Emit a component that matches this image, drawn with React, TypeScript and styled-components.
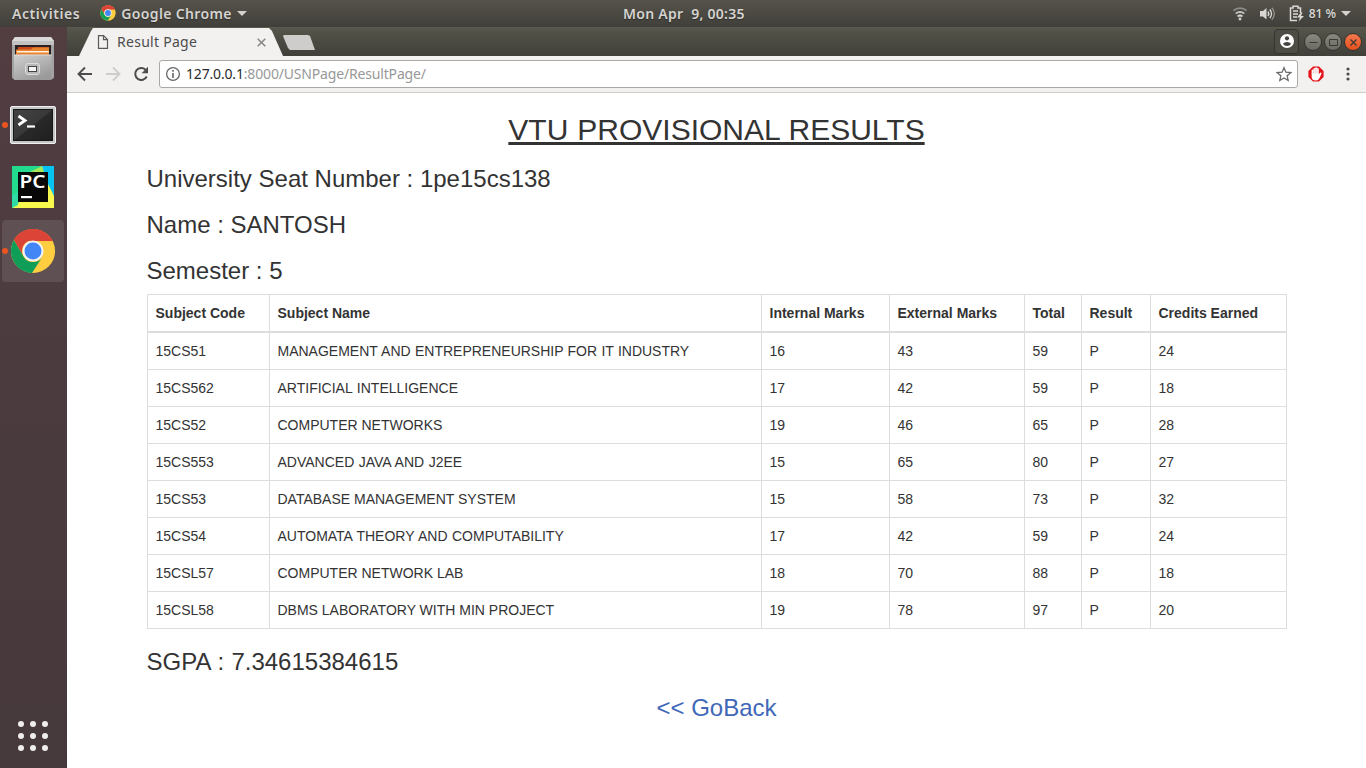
import React from "react";
import styled, { createGlobalStyle } from "styled-components";

const Global = createGlobalStyle`
  * { box-sizing: border-box; }
  body { margin: 0; background: #fff; overflow: hidden; }
`;
const ui = `"Noto Sans", "Open Sans", sans-serif`;

const Desktop = styled.div`
  width: 1366px;
  height: 768px;
  display: flex;
  flex-direction: column;
  overflow: hidden;
  font-family: ${ui};
`;
const TopBar = styled.header`
  height: 27px;
  flex: none;
  display: grid;
  grid-template-columns: 1fr 124px 1fr;
  align-items: center;
  background: linear-gradient(#56534b, #403f3a);
  color: #d6d4d0;
`;
const BarGroup = styled.div<{ $end?: boolean }>`
  display: flex;
  align-items: center;
  height: 27px;
  justify-content: ${(p) => (p.$end ? "flex-end" : "flex-start")};
  padding: ${(p) => (p.$end ? "0 15px 0 0" : "0 0 0 12px")};
`;
const BarText = styled.span<{ $size?: number; $spacing?: number; $ml?: number }>`
  font-size: ${(p) => p.$size ?? 14}px;
  font-weight: 600;
  line-height: 26px;
  letter-spacing: ${(p) => p.$spacing ?? 0}px;
  margin-left: ${(p) => p.$ml ?? 0}px;
  white-space: pre;
  text-shadow: 0 1px 1px #2d2c29;
`;
const Caret = styled.i<{ $ml: number }>`
  margin-left: ${(p) => p.$ml}px;
  border: 5px solid transparent;
  border-top-color: #d4d2ce;
  border-bottom: 0;
`;
const Body = styled.div`
  flex: 1;
  display: flex;
  min-height: 0;
`;
const Dock = styled.nav`
  width: 67px;
  flex: none;
  display: flex;
  flex-direction: column;
  background: linear-gradient(#523d41, #4b3b3f 45%, #46393c);
`;
const DockItem = styled.div<{ $active?: boolean; $h: number }>`
  height: ${(p) => p.$h}px;
  width: 62px;
  margin-left: 2px;
  display: flex;
  align-items: center;
  justify-content: center;
  position: relative;
  border-radius: 4px;
  background: ${(p) => (p.$active ? "#5f5054" : "transparent")};
`;
const RunningDot = styled.i`
  position: absolute;
  left: 0;
  top: 50%;
  width: 6px;
  height: 6px;
  margin-top: -3px;
  border-radius: 50%;
  background: #e95420;
`;
const DockEnd = styled.div`
  margin-top: auto;
  padding: 0 0 16px 17px;
  height: 48px;
  display: flex;
`;
const Browser = styled.main`
  flex: 1;
  display: flex;
  flex-direction: column;
  background: #fff;
`;
const TabStrip = styled.div`
  height: 29px;
  flex: none;
  display: flex;
  align-items: flex-end;
  background: linear-gradient(#5b5a4e 0, #54544a 2px, #403f39);
`;
const Tab = styled.div`
  width: 204px;
  height: 28px;
  margin-left: 12px;
  padding: 0 16px 0 18px;
  display: flex;
  align-items: center;
  background: #f2f1f0;
  clip-path: polygon(0 100%, 12px 3px, 14px 0, 190px 0, 193px 3px, 100% 100%);
`;
const TabTitle = styled.span`
  flex: 1;
  margin: -1px 0 0 8px;
  font-size: 14px;
  letter-spacing: 0.28px;
  color: #4c4c4c;
`;
const NewTab = styled.div`
  width: 32px;
  height: 15px;
  margin: 0 0 6px 0;
  background: #cecdcb;
  clip-path: polygon(1px 0, 25px 0, 27px 1px, 32px 15px, 7px 15px, 5px 13px, 0 1px);
`;
const WindowControls = styled.div`
  margin-left: auto;
  height: 28px;
  display: flex;
  align-items: center;
  padding-right: 4px;
`;
const ProfileButton = styled.div`
  width: 25px;
  height: 25px;
  border: 1px solid #34332e;
  border-radius: 4px;
  display: flex;
  align-items: center;
  justify-content: center;
  margin: 0 5px 2px 0;
  background: #4e4d45;
`;
const RoundButton = styled.div<{ $close?: boolean }>`
  width: 18px;
  height: 18px;
  border-radius: 50%;
  border: 1px solid #35342f;
  background: ${(p) => (p.$close ? "linear-gradient(#f5784d, #e4511d)" : "linear-gradient(#898880, #6a6962)")};
  display: flex;
  align-items: center;
  justify-content: center;
  & + & { margin-left: 2px; }
`;
const Toolbar = styled.div`
  height: 37px;
  flex: none;
  display: flex;
  align-items: center;
  background: #f2f1f0;
  border-bottom: 1px solid #cdcccb;
  padding-left: 9px;
`;
const AddressBar = styled.div`
  width: 1139px;
  height: 28px;
  margin-left: 9px;
  display: flex;
  align-items: center;
  border: 1px solid #a9a8a7;
  border-radius: 3px;
  background: #fff;
  padding: 0 5px;
`;
const Url = styled.span`
  flex: 1;
  margin-left: 5px;
  font-size: 14px;
  line-height: 24px;
  letter-spacing: -0.17px;
  color: #989898;
`;
const Host = styled.span`
  color: #2b2b2b;
`;
const Page = styled.div`
  width: 1170px;
  margin: 0 auto;
  padding: 20px 15px 0;
  font-family: "Liberation Sans", Arial, sans-serif;
  color: #333;
`;
const Title = styled.h2`
  margin: 0 0 20px;
  font-size: 30px;
  line-height: 33px;
  font-weight: 400;
  text-align: center;
  text-decoration: underline;
  text-decoration-skip-ink: none;
  word-spacing: 0.6px;
`;
const Info = styled.h3<{ $gap?: number; $center?: boolean; $words?: number }>`
  margin: 0 0 ${(p) => p.$gap ?? 20}px;
  font-size: 24px;
  line-height: 26px;
  font-weight: 400;
  text-align: ${(p) => (p.$center ? "center" : "left")};
  word-spacing: ${(p) => p.$words ?? 0}px;
`;
const BackLink = styled.a`
  color: #3f68b8;
  text-decoration: none;
`;
const Table = styled.table`
  width: 1139px;
  table-layout: fixed;
  border-collapse: collapse;
  margin-bottom: 20px;
  font-size: 14px;
  line-height: 20px;
`;
const Th = styled.th`
  padding: 8px;
  text-align: left;
  border: 1px solid #ddd;
  border-bottom-width: 2px;
`;
const Td = styled.td<{ $words?: number }>`
  padding: 8px;
  border: 1px solid #ddd;
  word-spacing: ${(p) => p.$words ?? 0}px;
`;

const ChromeLogo = ({ size }: { size: number }) => (
  <svg width={size} height={size} viewBox="0 0 48 48">
    <circle cx="24" cy="24" r="23" fill="#ffcd40" />
    <path d="M4.100 12.500A23 23 0 0 1 43.900 12.500H24a11.500 11.500 0 0 0-10 17.200z" fill="#dc4437" />
    <path d="M4.100 12.500A23 23 0 0 0 23 47L34 29.700a11.500 11.500 0 0 1-20 0z" fill="#109d58" />
    <path d="M4.100 12.500A23 23 0 0 1 43.900 12.500H44.500V13.500H24z" fill="#dc4437" />
    <circle cx="24" cy="24" r="11" fill="#f2f2f2" />
    <circle cx="24" cy="24" r="8.800" fill="#4285f4" />
  </svg>
);

const FilesIcon = () => (
  <svg width="44" height="46" viewBox="0 0 44 46">
    <defs>
      <linearGradient id="cab" x2="0.600" y2="1"><stop stopColor="#d0d0d0" /><stop offset="1" stopColor="#9a9a9a" /></linearGradient>
    </defs>
    <path d="M4 1h36l3 4v36q0 2-2 2H3q-2 0-2-2V5z" fill="#a3a3a3" />
    <path d="M4 1h36l3 4H1z" fill="#d9d9d9" />
    <path d="M1 5h42v4H1z" fill="#c2c2c2" />
    <path d="M4 9h36v12H4z" fill="#2a2220" />
    <path d="M7 11h31v5H7z" fill="#c8481b" />
    <path d="M5 13.500h15l2-2h16v8H5z" fill="#e88430" />
    <path d="M6 15h32v1.500H6z" fill="#fff1df" />
    <path d="M3 19h37.500v25H3z" fill="url(#cab)" />
    <path d="M3 19h37.500" stroke="#dedede" />
    <rect x="14.500" y="27.500" width="14" height="11" rx="2.500" fill="#b9b9b9" stroke="#dcdcdc" />
    <rect x="17.500" y="30.500" width="8" height="5" fill="#f5f5f5" stroke="#444" />
  </svg>
);

const TerminalIcon = () => (
  <svg width="46" height="38" viewBox="0 0 46 38">
    <defs>
      <linearGradient id="scr" x2="1" y2="1"><stop stopColor="#444" /><stop offset="0.500" stopColor="#383838" /><stop offset="0.510" stopColor="#292929" /><stop offset="1" stopColor="#1f1f1f" /></linearGradient>
    </defs>
    <rect x="0.500" y="0.500" width="45" height="37" rx="1.500" fill="#c6c6c6" stroke="#f0f0f0" />
    <rect x="3.500" y="3.500" width="39" height="31" fill="url(#scr)" stroke="#161616" />
    <path d="M8.500 10l6.500 4.500-6.500 4.500" fill="none" stroke="#fff" strokeWidth="2.800" />
    <path d="M17 20.500h8" stroke="#fff" strokeWidth="2.200" />
  </svg>
);

const PyCharmIcon = () => (
  <svg width="42" height="42" viewBox="0 0 42 42">
    <path d="M0 0h42v42H0z" fill="#f8f94c" />
    <path d="M0 0h32L18 8 6 38l-6 4z" fill="#22db8e" />
    <path d="M18 6L30 0l3 8H18z" fill="#a4e85a" />
    <path d="M30 0h12v30l-6-12z" fill="#07c3f2" />
    <path d="M0 42V30l6-4v13z" fill="#2fdca6" />
    <path d="M6 6h30v30H6z" fill="#080808" />
    <text x="7.500" y="22" fontFamily="Noto Sans, sans-serif" fontSize="18.500" fontWeight="600" fill="#fff" textLength="26" lengthAdjust="spacingAndGlyphs">PC</text>
    <path d="M9 30h11v2.200H9z" fill="#fff" />
  </svg>
);

const AppsIcon = () => (
  <svg width="32" height="32" viewBox="0 0 32 32" fill="#efeeed">
    {[4, 16, 28].map((y) => [4, 16, 28].map((x) => <circle key={`${x}-${y}`} cx={x} cy={y} r="3" />))}
  </svg>
);

const WifiIcon = () => (
  <svg width="16" height="16" viewBox="0 0 16 16" fill="none" stroke="#8f8d87" strokeWidth="1.800">
    <path d="M1.500 4.700a9.600 9.600 0 0 1 13 0" />
    <path d="M3.700 7.700a6.300 6.300 0 0 1 8.600 0" stroke="#c4c2be" />
    <path d="M5.600 10.500a3.700 3.700 0 0 1 4.800 0" stroke="#dad8d4" />
    <circle cx="8" cy="13" r="1.100" fill="#dad8d4" stroke="#dad8d4" strokeWidth="0.800" />
  </svg>
);
const VolumeIcon = () => (
  <svg width="16" height="14" viewBox="0 0 16 14" fill="none">
    <path d="M1 4h3l3.500-3v11.500L4 9.500H1z" fill="#dad8d4" />
    <path d="M9 4.500a4 4 0 0 1 0 4.500" stroke="#dad8d4" strokeWidth="1.500" />
    <path d="M10.800 2.500a6.500 6.500 0 0 1 0 8.500" stroke="#dad8d4" strokeWidth="1.500" />
    <path d="M12.800 .8a8.500 8.500 0 0 1 0 12" stroke="#92908a" strokeWidth="1.400" />
  </svg>
);
const BatteryIcon = () => (
  <svg width="15" height="17" viewBox="0 0 15 17" fill="none" stroke="#dad8d4">
    <path d="M8 15.500H1.500V3H4V1.200h5V3h2.500v5" strokeWidth="1.500" />
    <path d="M4 6h5M4 9h5M4 12h4" strokeWidth="1.700" />
    <path d="M12 7.500L8 12.500h3l-1.500 4L15 11h-3l1.500-3.500z" fill="#dad8d4" stroke="none" />
  </svg>
);
const DocumentIcon = () => (
  <svg width="12" height="16" viewBox="0 0 12 16" fill="none" stroke="#5a5a5a" strokeWidth="1.200">
    <path d="M1.500 1.600h5l4 4v8.800h-9z" /><path d="M6.500 1.600v4h4" />
  </svg>
);
const ArrowIcon = ({ forward }: { forward?: boolean }) => (
  <svg width="18" height="18" viewBox="0 0 18 18" fill="none" stroke={forward ? "#cecdcc" : "#4c4c4c"} strokeWidth="1.900">
    <path d={forward ? "M2 9h13M9 2.500L15.500 9 9 15.500" : "M16 9H3M9 2.500L2.500 9 9 15.500"} />
  </svg>
);
const ReloadIcon = () => (
  <svg width="18" height="18" viewBox="0 0 18 18" fill="none">
    <path d="M14.700 11.500A6 6 0 1 1 13.500 4.700" stroke="#4c4c4c" strokeWidth="2" />
    <path d="M16 1.800v6.400H9.600z" fill="#4c4c4c" />
  </svg>
);
const InfoIcon = () => (
  <svg width="16" height="16" viewBox="0 0 16 16" fill="none">
    <circle cx="8" cy="8" r="6.400" stroke="#666" strokeWidth="1.300" />
    <path d="M8 4v1.700M8 7v5" stroke="#666" strokeWidth="1.600" />
  </svg>
);
const StarIcon = () => (
  <svg width="16" height="16" viewBox="0 0 16 16">
    <path d="M8 1.700l1.900 4.500 4.900.4-3.700 3.200 1.100 4.700L8 12l-4.200 2.500 1.100-4.700L1.200 6.600l4.900-.4z" fill="none" stroke="#686868" strokeWidth="1.250" />
  </svg>
);
const BlockerIcon = () => (
  <svg width="16" height="16" viewBox="0 0 16 16">
    <path d="M5 .4h6L15.600 5v6L11 15.600H5L.4 11V5z" fill="#e4151a" />
    <path d="M3.600 9V4.500q.1-.9.900-.9t.9.900V3q.1-.9.900-.9t.9.900V2q.2-.8.9-.8T9 2v1q.1-.9.900-.9t.9.900v5.400l1-1.500q1.100-.9 1.900 0L11.600 12q-1.200 2.600-3.800 2.600-4.200 0-4.200-4z" fill="#fff" />
    <path d="M5.400 4.500v3M7.200 3v4.500M9 3v4.500" stroke="#d99c9d" strokeWidth=".5" />
  </svg>
);
const MenuDots = () => (
  <svg width="4" height="14" viewBox="0 0 4 14" fill="#4c4c4c">
    <circle cx="2" cy="2" r="1.600" /><circle cx="2" cy="7" r="1.600" /><circle cx="2" cy="12" r="1.600" />
  </svg>
);
const ProfileIcon = () => (
  <svg width="14" height="14" viewBox="0 0 14 14">
    <circle cx="7" cy="7" r="7" fill="#fff" />
    <circle cx="7" cy="4.300" r="2.100" fill="#45443e" />
    <path d="M2.800 9.800Q4.500 7.900 7 7.900t4.200 1.900Q9.700 12 7 12t-4.200-2.200z" fill="#45443e" />
  </svg>
);
const Glyph = ({ d, color = "#3a3934", w = 1 }: { d: string; color?: string; w?: number }) => (
  <svg width="11" height="11" viewBox="0 0 11 11" fill="none" stroke={color} strokeWidth={w}><path d={d} /></svg>
);
const Slot = styled.span<{ $ml: number; $lift?: number }>`
  display: flex;
  margin-left: ${(p) => p.$ml}px;
  margin-bottom: ${(p) => p.$lift ?? 0}px;
`;

const headings = ["Subject Code", "Subject Name", "Internal Marks", "External Marks", "Total", "Result", "Credits Earned"];
const widths = [122, 492, 128, 135, 57, 69, 136];
const rows = [
  ["15CS51", "MANAGEMENT AND ENTREPRENEURSHIP FOR IT INDUSTRY", 16, 43, 59, "P", 24],
  ["15CS562", "ARTIFICIAL INTELLIGENCE", 17, 42, 59, "P", 18],
  ["15CS52", "COMPUTER NETWORKS", 19, 46, 65, "P", 28],
  ["15CS553", "ADVANCED JAVA AND J2EE", 15, 65, 80, "P", 27],
  ["15CS53", "DATABASE MANAGEMENT SYSTEM", 15, 58, 73, "P", 32],
  ["15CS54", "AUTOMATA THEORY AND COMPUTABILITY", 17, 42, 59, "P", 24],
  ["15CSL57", "COMPUTER NETWORK LAB", 18, 70, 88, "P", 18],
  ["15CSL58", "DBMS LABORATORY WITH MIN PROJECT", 19, 78, 97, "P", 20],
];
const wordGaps: Record<string, number> = { "15CS51": 0.4, "15CS562": 0.8, "15CS553": 0.6, "15CS54": 0.6 };

export default function App() {
  return (
    <Desktop>
      <Global />
      <TopBar>
        <BarGroup>
          <BarText $spacing={0.58}>Activities</BarText>
          <Slot $ml={20} $lift={1}><ChromeLogo size={16} /></Slot>
          <BarText $ml={5} $spacing={0.36}>Google Chrome</BarText>
          <Caret $ml={5} />
        </BarGroup>
        <BarText $ml={2} $spacing={0.27}>Mon Apr  9, 00:35</BarText>
        <BarGroup $end>
          <WifiIcon />
          <Slot $ml={11}><VolumeIcon /></Slot>
          <Slot $ml={14}><BatteryIcon /></Slot>
          <BarText $size={12} $ml={5}>81 %</BarText>
          <Caret $ml={5} />
        </BarGroup>
      </TopBar>
      <Body>
        <Dock>
          <DockItem $h={64}><FilesIcon /></DockItem>
          <DockItem $h={67}><TerminalIcon /><RunningDot /></DockItem>
          <DockItem $h={58}><PyCharmIcon /></DockItem>
          <Slot $ml={0} $lift={4} />
          <DockItem $h={62} $active><ChromeLogo size={46} /><RunningDot /></DockItem>
          <DockEnd><AppsIcon /></DockEnd>
        </Dock>
        <Browser>
          <TabStrip>
            <Tab>
              <DocumentIcon />
              <TabTitle>Result Page</TabTitle>
              <Glyph d="M1.700 1.700l7.600 7.600M9.300 1.700l-7.600 7.600" color="#858585" w={1.5} />
            </Tab>
            <NewTab />
            <WindowControls>
              <ProfileButton><ProfileIcon /></ProfileButton>
              <RoundButton><Glyph d="M1.500 5.500h8" /></RoundButton>
              <RoundButton><Glyph d="M1.500 2.500h8v6h-8z" /></RoundButton>
              <RoundButton $close><Glyph d="M2.500 2.500l6 6M8.500 2.500l-6 6" w={1.2} /></RoundButton>
            </WindowControls>
          </TabStrip>
          <Toolbar>
            <ArrowIcon />
            <Slot $ml={10}><ArrowIcon forward /></Slot>
            <Slot $ml={10}><ReloadIcon /></Slot>
            <AddressBar>
              <InfoIcon />
              <Url><Host>127.0.0.1</Host>:8000/USNPage/ResultPage/</Url>
              <StarIcon />
            </AddressBar>
            <Slot $ml={10}><BlockerIcon /></Slot>
            <Slot $ml={22}><MenuDots /></Slot>
          </Toolbar>
          <Page>
            <Title>VTU PROVISIONAL RESULTS</Title>
            <Info>University Seat Number : 1pe15cs138</Info>
            <Info>Name : SANTOSH</Info>
            <Info $gap={10}>Semester : 5</Info>
            <Table>
              <colgroup>{widths.map((w, i) => <col key={i} width={w} />)}</colgroup>
              <thead><tr>{headings.map((h) => <Th key={h}>{h}</Th>)}</tr></thead>
              <tbody>
                {rows.map((r) => <tr key={r[0]}>{r.map((c, i) => <Td key={i} $words={wordGaps[r[0]]}>{c}</Td>)}</tr>)}
              </tbody>
            </Table>
            <Info $words={0.65}>SGPA : 7.34615384615</Info>
            <Info $center><BackLink>&lt;&lt; GoBack</BackLink></Info>
          </Page>
        </Browser>
      </Body>
    </Desktop>
  );
}
